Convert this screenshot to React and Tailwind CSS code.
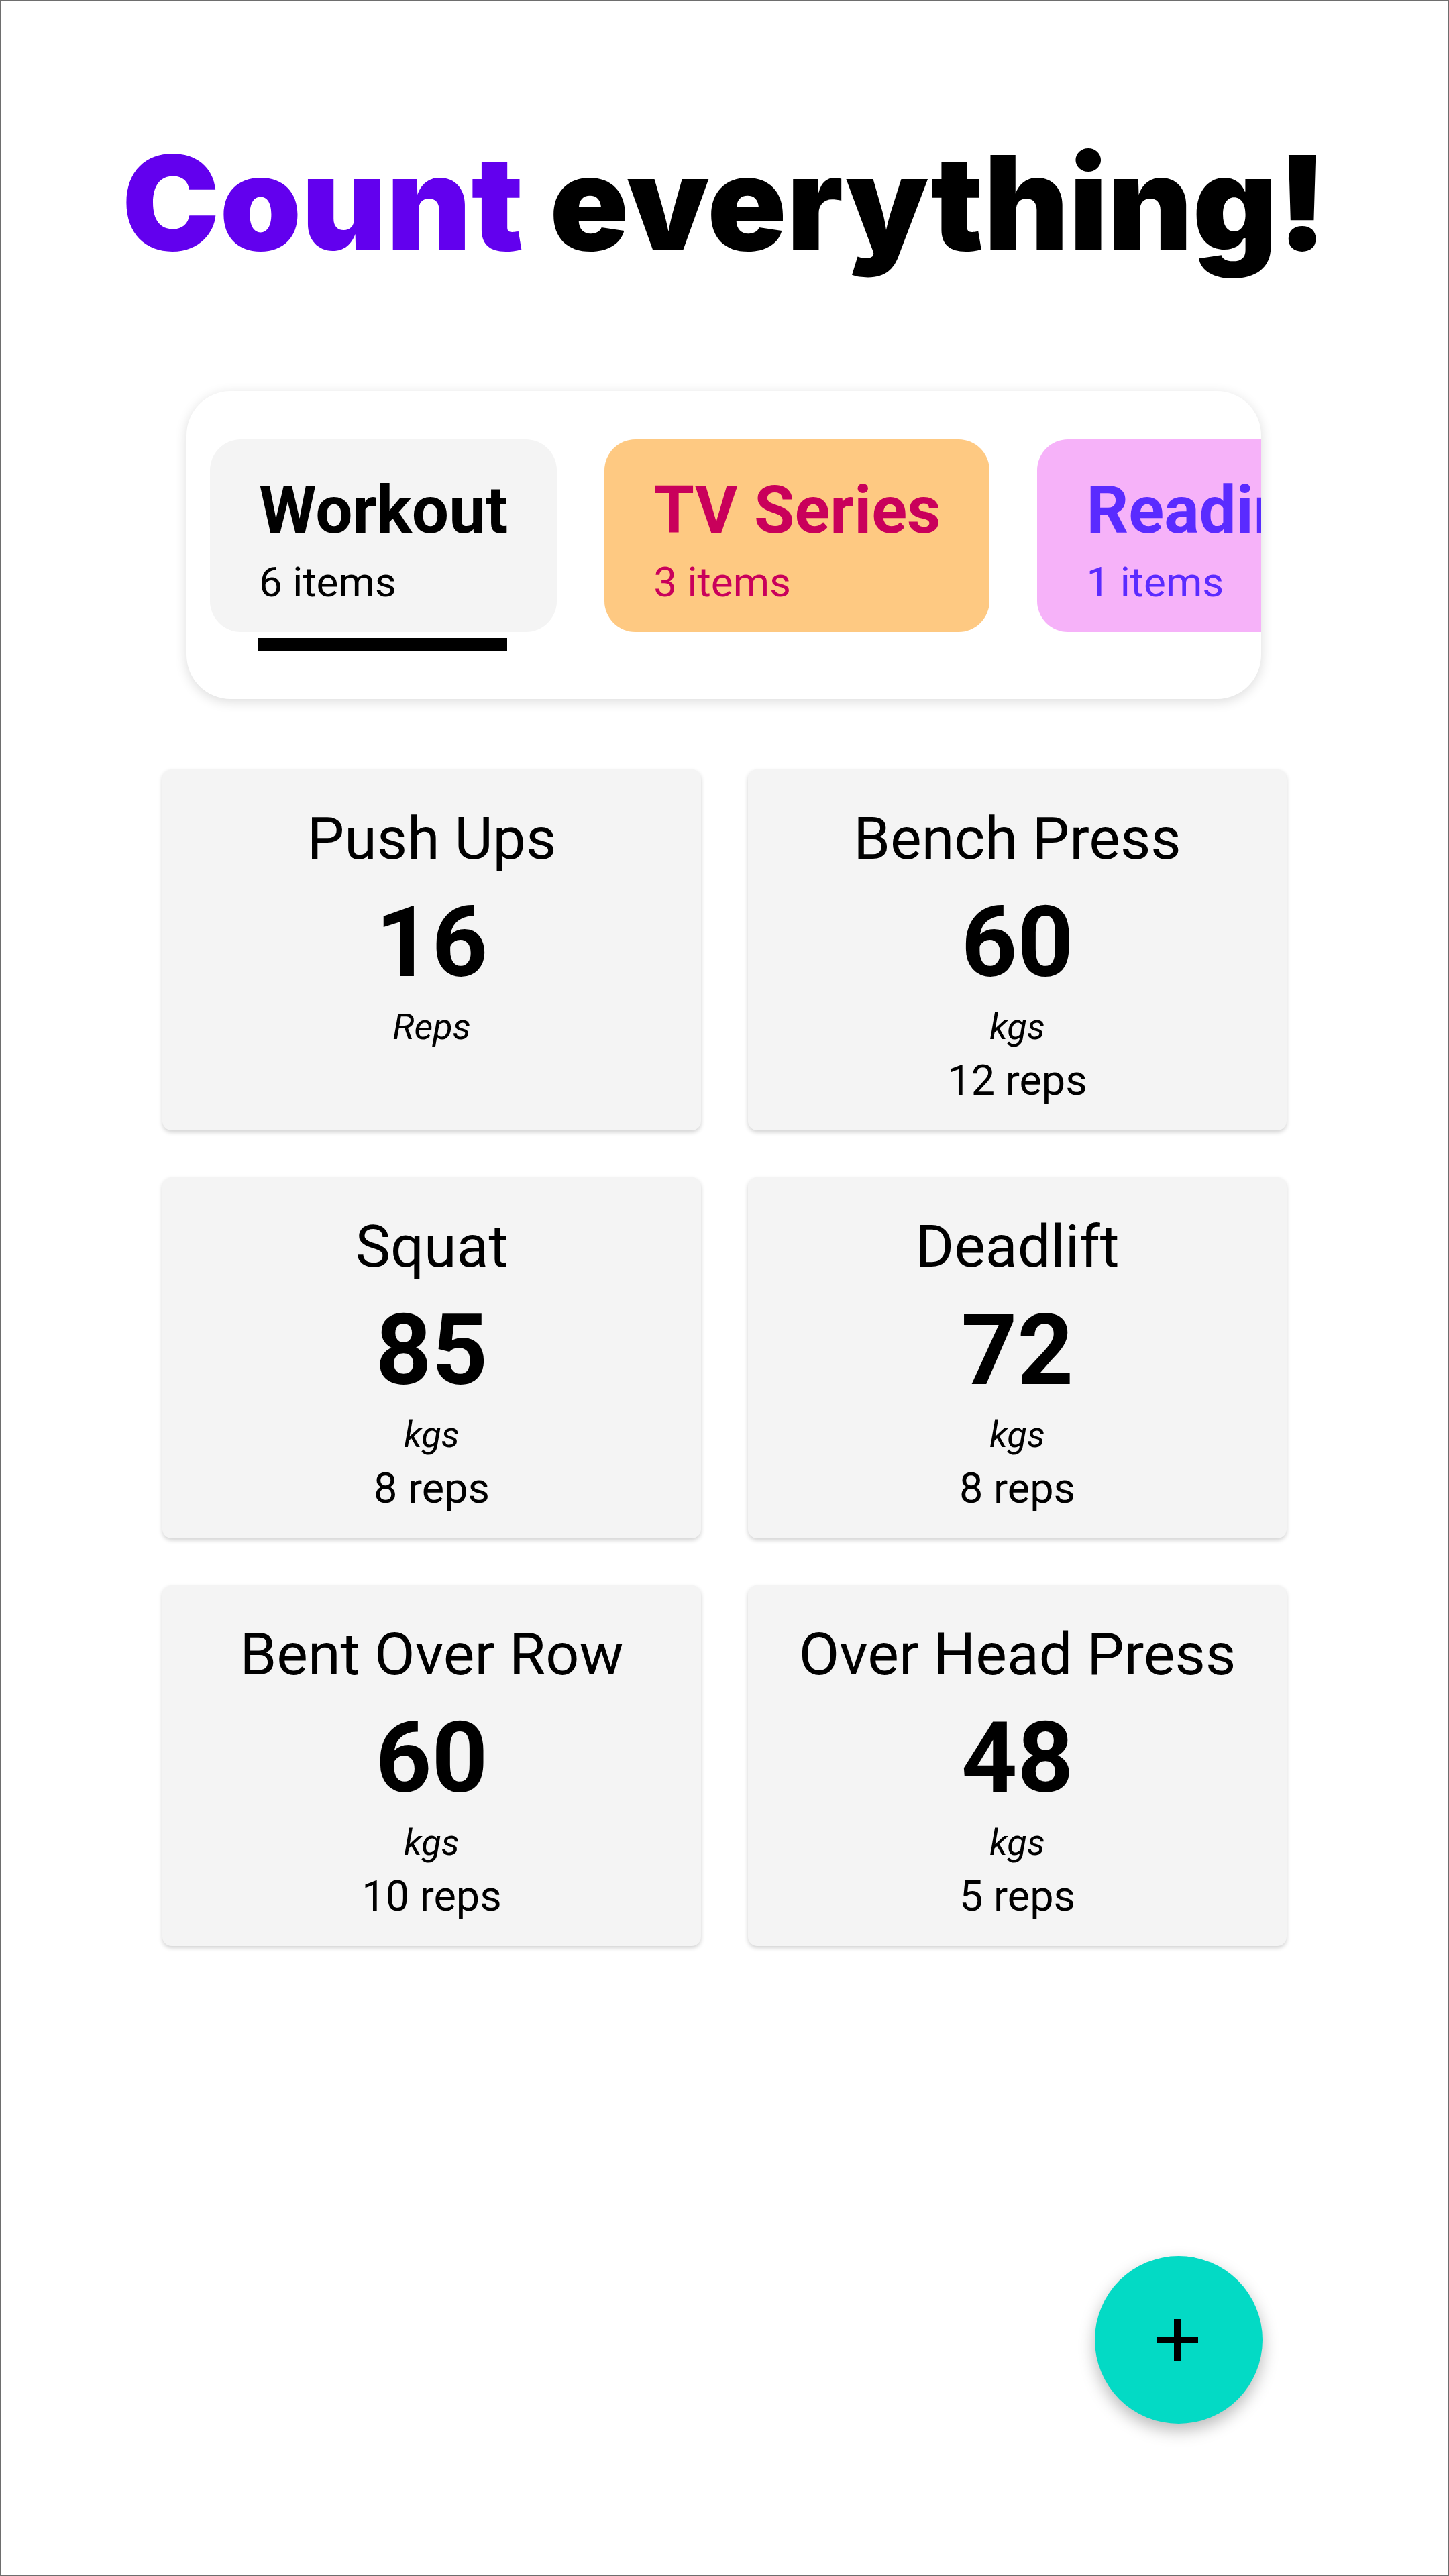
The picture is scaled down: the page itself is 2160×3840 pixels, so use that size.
const categories = [
  { name: "Workout", count: 6, bg: "bg-[#f4f4f4]", text: "text-black", active: true },
  { name: "TV Series", count: 3, bg: "bg-[#fec982]", text: "text-[#c9005b]" },
  { name: "Reading", count: 1, bg: "bg-[#f6b2f9]", text: "text-[#5a2bff]" },
];

const exercises = [
  { name: "Push Ups", value: 16, unit: "Reps" },
  { name: "Bench Press", value: 60, unit: "kgs", reps: 12 },
  { name: "Squat", value: 85, unit: "kgs", reps: 8 },
  { name: "Deadlift", value: 72, unit: "kgs", reps: 8 },
  { name: "Bent Over Row", value: 60, unit: "kgs", reps: 10 },
  { name: "Over Head Press", value: 48, unit: "kgs", reps: 5 },
];

function CategoryTab({ cat }) {
  return (
    <div className="flex shrink-0 flex-col items-start">
      <div className={`rounded-[46px] ${cat.bg} ${cat.text} h-[287px] px-[73px] pt-[48px]`}>
        <div className="whitespace-nowrap text-[98px] font-bold leading-[115px]">
          {cat.name}
        </div>
        <div className="mt-[13px] whitespace-nowrap text-[62px] leading-[73px]">
          {cat.count} items
        </div>
      </div>
      {cat.active && (
        <div className="ml-[72px] mt-[9px] h-[19px] w-[371px] bg-black" />
      )}
    </div>
  );
}

function ExerciseCard({ ex }) {
  return (
    <div className="flex h-[538px] flex-col items-center rounded-[14px] bg-[#f4f4f4] pt-[51px] text-black shadow-[0_3px_6px_rgba(0,0,0,0.18)]">
      <div className="text-[88px] leading-[104px]">{ex.name}</div>
      <div className="mt-[18px] text-[146px] font-bold leading-[172px]">{ex.value}</div>
      <div className="mt-[7px] text-[54px] italic leading-[64px]">{ex.unit}</div>
      {ex.reps && (
        <div className="mt-[11px] text-[63px] leading-[74px]">{ex.reps} reps</div>
      )}
    </div>
  );
}

export default function App() {
  return (
    <div className="relative h-[3840px] w-[2160px] overflow-hidden border border-[#6e6e6e] bg-white font-['Roboto',sans-serif]">
      <h1 className="pt-[204px] text-center font-['Inter',sans-serif] text-[195px] font-black leading-[195px] text-black">
        <span className="text-[#6200ee]">Count</span> everything!
      </h1>

      <div className="ml-[277px] mr-[279px] mt-[183px] overflow-hidden rounded-[66px] bg-white py-[72px] pl-[35px] shadow-[0_4px_18px_rgba(0,0,0,0.14)]">
        <div className="flex gap-[71px]">
          {categories.map((cat) => (
            <CategoryTab key={cat.name} cat={cat} />
          ))}
        </div>
      </div>

      <div className="mx-[241px] mt-[105px] grid grid-cols-2 gap-[70px]">
        {exercises.map((ex) => (
          <ExerciseCard key={ex.name} ex={ex} />
        ))}
      </div>

      <button className="absolute bottom-[226px] right-[277px] flex h-[250px] w-[250px] items-center justify-center rounded-full bg-[#03dac5] shadow-[0_10px_24px_rgba(0,0,0,0.28)]">
        <svg width="64" height="64" viewBox="0 0 64 64" className="mr-[4px]">
          <path d="M32 1V63M1 32H63" stroke="black" strokeWidth="10" fill="none" />
        </svg>
      </button>
    </div>
  );
}
